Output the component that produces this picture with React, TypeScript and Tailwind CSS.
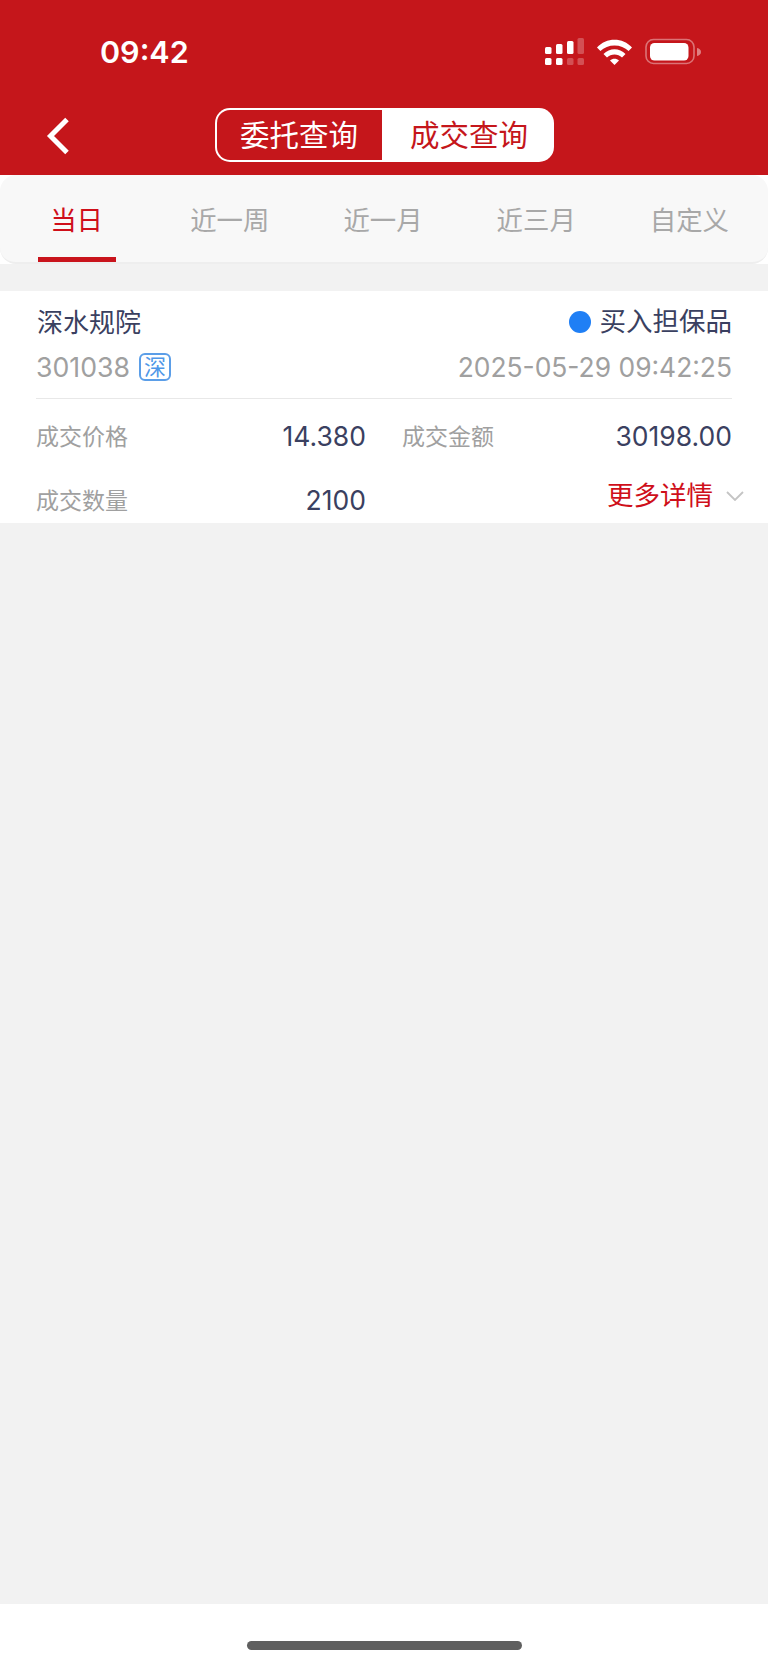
import React from "react";

const tabs = ["当日", "近一周", "近一月", "近三月", "自定义"];

const font = "font-['Inter','Noto_Sans_CJK_SC',sans-serif]";

const StatusIcons = () => (
  <svg width="157" height="30" viewBox="0 0 157 30" fill="none">
    {/* signal */}
    <g fill="#fff">
      <rect x="0" y="10" width="6.5" height="7" rx="1.5" />
      <rect x="11" y="7" width="6.5" height="10" rx="1.5" />
      <rect x="22" y="4" width="6.5" height="13" rx="1.5" />
      <rect x="32.5" y="1" width="6.5" height="16" rx="1.5" opacity="0.25" />
      <rect x="0" y="21" width="6.5" height="7" rx="1.5" />
      <rect x="11" y="21" width="6.5" height="7" rx="1.5" />
      <rect x="22" y="21" width="6.5" height="7" rx="1.5" opacity="0.25" />
      <rect x="32.5" y="21" width="6.5" height="7" rx="1.5" opacity="0.25" />
    </g>
    {/* wifi */}
    <g fill="#fff">
      <path d="M52 10.5 C61 0 78 0 87 10.5 L83.6 14 C76.5 6.5 62.5 6.5 55.4 14 Z" />
      <path d="M58.5 17 C64.5 10.5 74.5 10.5 80.5 17 L77 20.5 C73 16.5 66 16.5 62 20.5 Z" />
      <path d="M65 23.5 C67.5 21 71.5 21 74 23.5 L69.5 28 Z" />
    </g>
    {/* battery */}
    <rect x="101" y="2.5" width="48" height="24" rx="7.5" stroke="#fff" strokeOpacity="0.4" strokeWidth="1.6" />
    <rect x="105" y="6" width="38.5" height="17.5" rx="4.5" fill="#fff" />
    <path d="M152 11 C154.5 11.5 156 13 156 15 C156 17 154.5 18.5 152 19 Z" fill="#fff" fillOpacity="0.45" />
  </svg>
);

const Field = ({ label, value }: { label: string; value: string }) => (
  <div className="flex items-center justify-between">
    <span className="text-[23px] text-[#a0a0a0]">{label}</span>
    <span className="text-[26.5px] text-[#3a4060]">{value}</span>
  </div>
);

export default function App() {
  return (
    <div className={`${font} flex min-h-[1665px] w-[768px] flex-col bg-white`}>
      <header className="h-[175px] bg-[#c5161b]">
        <div className="flex h-[104px] items-center justify-between pl-[100px] pr-[66px]">
          <span className="text-[30.5px] font-semibold leading-none text-white">09:42</span>
          <div className="-mt-[1px]">
            <StatusIcons />
          </div>
        </div>
        <div className="relative flex justify-center pt-[4px]">
          <button className="absolute left-[46px] top-[13px]">
            <svg width="24" height="38" viewBox="0 0 24 38" fill="none">
              <path d="M21 2.5 L4.5 19 L21 35.5" stroke="#fff" strokeWidth="5" />
            </svg>
          </button>
          <div className="flex h-[54px] w-[339px] rounded-[15px] bg-white p-[2px] text-[29.5px] leading-none">
            <span className="flex w-[165px] items-center justify-center rounded-l-[13px] bg-[#c5161b] pt-[1px] text-white">委托查询</span>
            <span className="flex flex-1 items-center justify-center pl-[5px] pt-[1px] text-[#c5161b]">成交查询</span>
          </div>
        </div>
      </header>

      <nav className="grid h-[89px] grid-cols-5 rounded-[16px] border-b-[2px] border-[#eeeeee] bg-[#f8f8f8] pr-[2px]">
        {tabs.map((tab, i) => (
          <div key={tab} className="relative flex items-center justify-center pt-[4px]">
            <span className={`text-[26.4px] ${i === 0 ? "text-[#cf0f1a]" : "text-[#a8a8a8]"}`}>{tab}</span>
            {i === 0 && <span className="absolute bottom-0 left-[38px] h-[5px] w-[78px] bg-[#c9141c]" />}
          </div>
        ))}
      </nav>

      <main className="flex-1 bg-[#f2f2f2] pt-[27px]">
        <section className="h-[232px] overflow-hidden bg-white px-[36px]">
          <div className="flex h-[62px] items-center justify-between text-[26px] text-[#3a4060]">
            <span className="pl-[1px]">深水规院</span>
            <span className="flex items-center gap-[9px] text-[26.5px]">
              <span className="h-[22px] w-[22px] rounded-full bg-[#1f7ff5]" />
              买入担保品
            </span>
          </div>
          <div className="flex h-[28px] items-center justify-between text-[#a0a0a0]">
            <span className="flex items-center gap-[9px] text-[26.7px]">
              301038
              <span className="flex h-[28px] w-[32px] items-center justify-center rounded-[6px] border-2 border-[#5b9ee8] text-[22px] leading-none text-[#4f97e8]">
                深
              </span>
            </span>
            <span className="pt-[1px] text-[26.4px]">2025-05-29 09:42:25</span>
          </div>
          <div className="mt-[17px] border-t border-[#e8e8e8]" />
          <div className="grid grid-cols-2 gap-x-[36px]">
            <div className="flex h-[75px] flex-col justify-center pt-[1px]">
              <Field label="成交价格" value="14.380" />
            </div>
            <div className="flex h-[75px] flex-col justify-center pt-[1px]">
              <Field label="成交金额" value="30198.00" />
            </div>
            <div className="flex h-[48px] flex-col justify-center pt-[6px]">
              <Field label="成交数量" value="2100" />
            </div>
            <div className="-mr-[12px] flex h-[48px] items-center justify-end gap-[13px] pb-[4px]">
              <span className="text-[26.5px] text-[#cf0f1a]">更多详情</span>
              <svg width="18" height="10" viewBox="0 0 18 10" fill="none">
                <path d="M1 1 L9 9 L17 1" stroke="#c4c4c4" strokeWidth="1.8" />
              </svg>
            </div>
          </div>
        </section>
      </main>

      <footer className="flex h-[61px] justify-center bg-white pt-[37px]">
        <div className="h-[9px] w-[275px] rounded-full bg-[#5f5f5f]" />
      </footer>
    </div>
  );
}
